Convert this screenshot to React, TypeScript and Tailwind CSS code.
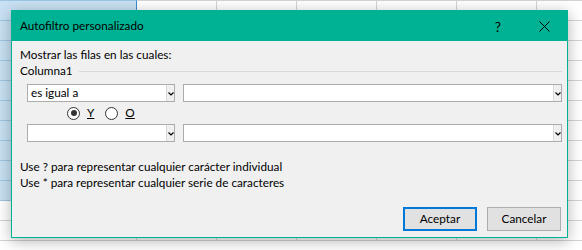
import React from "react";

const ROWS = 13;
const COLS = 6;

function Sheet() {
  return (
    <div className="flex flex-col -mt-[19px]">
      {Array.from({ length: ROWS }).map((_, r) => {
        const selected = r < 11;
        return (
          <div key={r} className="flex h-5">
            <div
              className={
                selected
                  ? "w-[137px] shrink-0 h-5 border-b border-r border-b-[#9cc6e4] border-r-[#3b8ad0] bg-[#c8e1f3]"
                  : "w-[137px] shrink-0 h-5 border-b border-r border-[#d4d4d4] bg-white"
              }
            />
            {Array.from({ length: COLS }).map((__, c) => (
              <div key={c} className="w-20 shrink-0 h-5 border-b border-r border-[#d4d4d4] bg-white" />
            ))}
          </div>
        );
      })}
    </div>
  );
}

function Chevron() {
  return (
    <svg width="6" height="4" viewBox="0 0 6 4" className="mt-[1px]">
      <path d="M0.5 0.5 L3 3 L5.5 0.5" fill="none" stroke="#000" strokeWidth="1.2" />
    </svg>
  );
}

function Combo({ width, text }: { width: string; text?: string }) {
  return (
    <div className={`${width} h-[18px] flex border border-[#acacac] bg-white`}>
      <div className="flex-1 flex items-center pl-[3px] text-[11.75px] leading-none text-black">{text}</div>
      <div className="w-[8px] flex items-center justify-center border-l border-[#d9d9d9] bg-[#f0f0f0]">
        <Chevron />
      </div>
    </div>
  );
}

function Radio({ checked }: { checked?: boolean }) {
  return (
    <div className="w-[13px] h-[13px] rounded-full border border-[#333333] bg-white flex items-center justify-center">
      {checked && <div className="w-[6px] h-[6px] rounded-full bg-[#333333]" />}
    </div>
  );
}

export default function App() {
  return (
    <div className="relative w-[582px] h-[250px] overflow-hidden bg-white font-['Lato',sans-serif]">
      <Sheet />
      <div className="absolute left-[11px] top-[10px] w-[557px] h-[228px] border border-[#00b294] bg-[#f0f0f0] shadow-[0_3px_14px_rgba(0,0,0,0.3)] flex flex-col">
        <div className="h-[30px] bg-[#00b294] flex items-center">
          <div className="flex-1 pl-[8px] text-[11.75px] text-black">Autofiltro personalizado</div>
          <div className="w-[46px] h-full flex items-center justify-center text-[14px] text-black">?</div>
          <div className="w-[46px] h-full flex items-center justify-center">
            <svg width="11" height="11" viewBox="0 0 11 11">
              <path d="M0.5 0.5 L10.5 10.5 M10.5 0.5 L0.5 10.5" stroke="#000" strokeWidth="1" />
            </svg>
          </div>
        </div>
        <div className="flex flex-col pl-[8px] pr-[5px] pt-[6px] text-[11.75px] leading-[16px] text-black">
          <div>Mostrar las filas en las cuales:</div>
          <div className="flex items-center gap-[6px]">
            <span>Columna1</span>
            <div className="flex-1 h-px bg-[#d9d9d9]" />
          </div>
          <div className="flex gap-[8px] mt-[5px] ml-[7px]">
            <Combo width="w-[148px]" text="es igual a" />
            <Combo width="flex-1" />
          </div>
          <div className="h-[22px] flex items-center ml-[47px]">
            <Radio checked />
            <span className="ml-[7px] underline">Y</span>
            <span className="ml-[11px]">
              <Radio />
            </span>
            <span className="ml-[7px] underline">O</span>
          </div>
          <div className="flex gap-[8px] ml-[7px]">
            <Combo width="w-[148px]" />
            <Combo width="flex-1" />
          </div>
          <div className="mt-[17px]">Use ? para representar cualquier carácter individual</div>
          <div>Use * para representar cualquier serie de caracteres</div>
          <div className="flex justify-end gap-[10px] mt-[16px] pr-[1px]">
            <div className="w-[74px] h-[24px] border-2 border-[#0078d7] bg-[#e1e1e1] flex items-center justify-center">
              Aceptar
            </div>
            <div className="w-[74px] h-[24px] border border-[#adadad] bg-[#e1e1e1] flex items-center justify-center">
              Cancelar
            </div>
          </div>
        </div>
      </div>
    </div>
  );
}
